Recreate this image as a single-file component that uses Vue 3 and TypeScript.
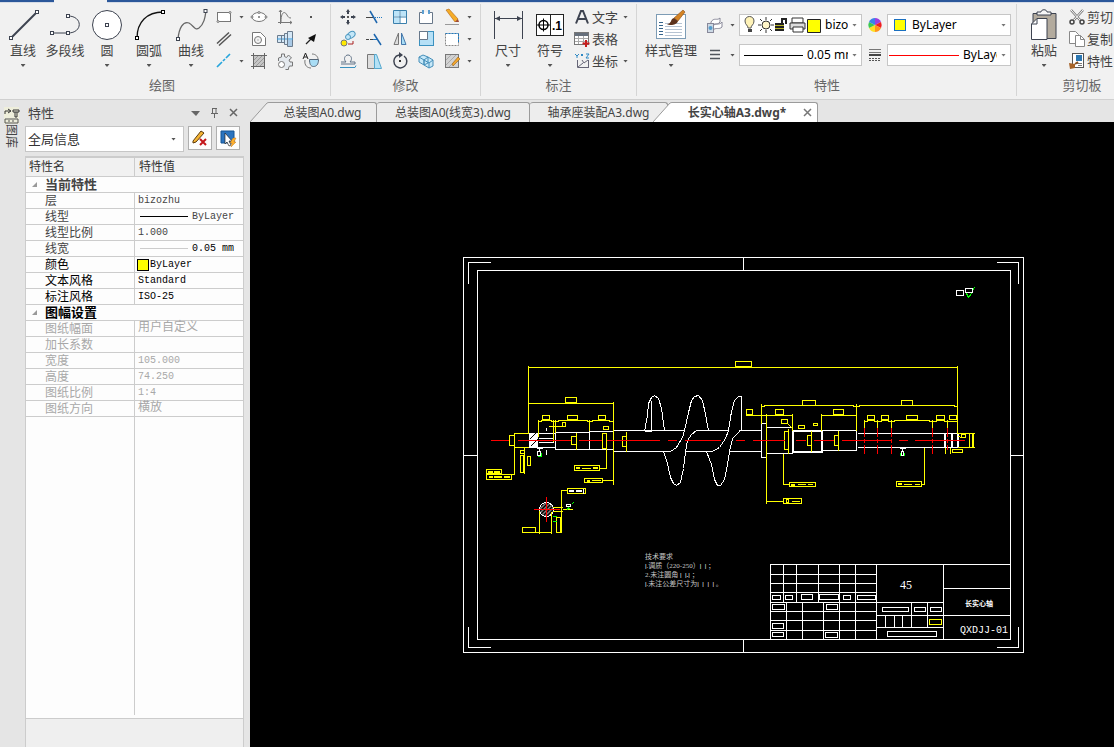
<script setup lang="ts">
import { ref } from 'vue'

interface Tool { icon: string; label: string; menu?: boolean }
interface Row { name: string; value?: string; kind?: 'line' | 'width' | 'color' | 'han'; tone: 'mid' | 'dark' | 'off' }
interface Section { title: string; tone: 'mid' | 'dark'; rows: Row[] }

const ink = '#3d4350'
const node = (x: number, y: number, c = ink) =>
  `<rect x="${x - 1.5}" y="${y - 1.5}" width="3" height="3" fill="#fff" stroke="${c}"/>`

const big: Record<string, string> = {
  line: `<path d="M4 29L30 3" stroke="${ink}" stroke-width="2"/>${node(4, 29)}${node(30, 3)}`,
  pline: `<path d="M3 24H19M19 7C34 7 34 24 19 24" stroke="${ink}" fill="none"/>${node(3, 24)}${node(19, 24)}${node(19, 7)}`,
  circle: `<circle cx="16" cy="16" r="14.5" fill="#fff" stroke="${ink}"/>${node(16, 16)}`,
  arc: `<path d="M4 29C4 13 14 3 30 3" stroke="#111" stroke-width="1.3" fill="none"/>${node(4, 29, '#000')}${node(30, 3, '#000')}`,
  spline: `<path d="M3 30C4 19 8 12 14 14C19 17 20 22 24 19C29 15 30 9 31 2" stroke="#666" stroke-width="1.3" fill="none"/>${node(3, 30)}${node(30.5, 2)}`,
  dim: `<path d="M2.500 2V30M30.500 2V30M3 9.500H30" stroke="${ink}"/><path d="M3 9.500l5-2.500v5zM30 9.500l-5-2.500v5z" fill="${ink}"/>`,
  symbol: `<rect x="2.500" y="5.500" width="27" height="21" fill="#fff" stroke="#222"/><path d="M16.500 5V27" stroke="#222"/><circle cx="9.500" cy="16" r="4.500" fill="none" stroke="#000" stroke-width="1.500"/><path d="M3 16H16M9.500 9.500V22.500" stroke="#000"/><text x="18" y="21" font-family="Liberation Sans,sans-serif" font-weight="700" font-size="12">.1</text>`,
  style: `<rect x="1.500" y="5.500" width="29" height="24" fill="#fff" stroke="#7d9cb5"/><path d="M4 13.500h4M4 16.500h4M4 19.500h4M4 22.500h4M4 25.500h4" stroke="#35648c"/><path d="M10 14.500h17M10 17.500h17M10 20.500h17M10 23.500h17M10 26.500h17" stroke="#b6c3d2"/><path d="M19 9L28 1l2 2l-7 9z" fill="#d48425" stroke="#8b4c13" stroke-width=".6"/><path d="M12 15c5 0 3-5 7-6l4 3c-1 4-8 5-11 3z" fill="#5d321b"/>`,
  paste: `<path d="M5 4.500h23v25H5z" fill="#b3ab9e" stroke="${ink}"/><path d="M9 6V3h4c0-3 6-3 6 0h4v3z" fill="#f7f7f7" stroke="${ink}"/><path d="M9 9.500h10v21H3.500V15z" fill="#fff" stroke="${ink}"/><path d="M3.500 15H9V9.500" fill="none" stroke="${ink}"/>`,
}

const small: Record<string, string> = {
  rect: `<rect x="2.500" y="4.500" width="13" height="9" fill="#fff" stroke="#777"/><circle cx="15" cy="4.500" r="1" fill="#fff" stroke="#777"/><circle cx="3" cy="13.500" r="1" fill="#fff" stroke="#777"/>`,
  ellipse: `<ellipse cx="9" cy="9" rx="7" ry="4.500" fill="#fff" stroke="#777"/><path d="M8 9h2M9 8v2" stroke="#777"/><circle cx="2" cy="9" r="1" fill="#fff" stroke="#777"/><circle cx="9" cy="4.500" r="1" fill="#fff" stroke="#777"/><circle cx="16" cy="9" r="1" fill="#fff" stroke="#777"/>`,
  graph: `<path d="M4.500 2v14M2 14.500h14M3 4l1.500-2L6 4M14 13l2 1.500l-2 1.500" fill="none" stroke="#777"/><path d="M5 14C5 3 9 3 11 7C12 9 13 10 15 10" fill="none" stroke="#777"/>`,
  dot: `<rect x="8" y="8" width="2" height="2" fill="#555"/>`,
  double: `<path d="M2 13.500L14 2.500M4 15.500L16 4.500" stroke="#555" stroke-width="1.500"/>`,
  hole: `<path d="M2.500 2.500h8l5 5v8h-13z" fill="#fff" stroke="#777"/><circle cx="8" cy="10" r="3.500" fill="#f2f2f2" stroke="#777"/><path d="M8 9.500v1" stroke="#777"/>`,
  shaft: `<path d="M1.500 5.500h7v-2h3v-2h5v15h-5v-2h-3v-2h-7z" fill="#d5e8f7" stroke="#6a7b8d"/><path d="M1 9h16" stroke="#3b9bdc"/><path d="M5.500 5v8M8.500 4v9M11.500 2v13" stroke="#6a7b8d"/><path d="M12 10h4v6h-4z" fill="#a9c9e6"/>`,
  arrow: `<path d="M4 14L9 9" stroke="#222" stroke-width="1.300"/><path d="M14 4l-2 8l-6-4z" fill="#111"/>`,
  cline: `<path d="M2 15L7 10M8 9l2-2M11 6l4-4" stroke="#27a5dc" stroke-width="1.700"/>`,
  hatch: `<rect x="4" y="4" width="10" height="10" fill="#c6c6c6"/><path d="M4 8l4-4M4 12l8-8M6 14l8-8M10 14l4-4" stroke="#999"/><path d="M1 3.500h16M1 14.500h14M3.500 1v16M14.500 1v16" stroke="#666"/>`,
  gear: `<path d="M2.500 9V6l3-1V2h3v2.500l2 1l2-2.500l3 3l-2.500 2l1 2h2.500v4h-3l-1 2v1.500h-3" fill="#e4e9ee" stroke="#777"/><circle cx="5.500" cy="12.500" r="3" fill="#fff" stroke="#777"/>`,
  block: `<path d="M3 8c-1 6 3 8 6 8M10 2c4 0 6 3 6 5" fill="none" stroke="#777"/><path d="M7.500 7.500h9c0 5-2 7-5 7c-3 0-4-3-4-7z" fill="#a9ddf5" stroke="#567"/><path d="M1 7l2.500-6L6 7M2 5h3" fill="none" stroke="#222"/>`,
  move: `<path d="M9 1l2 3H7zM9 17l2-3H7zM1 9l3-2v4zM17 9l-3-2v4z" fill="${ink}"/><path d="M9 4v2M9 12v2M4 9h2M12 9h2" stroke="${ink}" stroke-width="2"/><rect x="8" y="8" width="2" height="2" fill="#555"/>`,
  trim: `<path d="M1 9.500h8" stroke="#444"/><path d="M10 9.500h7" stroke="#1f7ac4" stroke-dasharray="1 1"/><path d="M5 3l7 12" stroke="#1c65ad" stroke-width="1.500"/>`,
  array: `<path d="M2.500 2.500h13v13h-13zM9 2v14M2 9h14" fill="#fff" stroke="#3b80ac"/><rect x="10" y="3" width="5" height="5" fill="#bde4f8"/><rect x="3" y="3" width="5" height="5" fill="#bde4f8"/><rect x="3" y="10" width="5" height="5" fill="#bde4f8"/>`,
  breakr: `<path d="M5 4.500H2.500v11h13v-11H13" fill="#fff" stroke="#687789"/><path d="M6 2v4M12 2v4" stroke="#2b81c3" stroke-width="1.500"/>`,
  erase: `<path d="M3 2l3-1l9 10l-3 3z" fill="#f6ad28" stroke="#ae6110" stroke-width=".6"/><path d="M12 14l3-3l1 3z" fill="#9f4a35"/><path d="M2 16.500h14" stroke="#999"/>`,
  copy: `<ellipse cx="12" cy="5" rx="4.500" ry="3" transform="rotate(-35 12 5)" fill="#c4e7f8" stroke="#4b96bf"/><circle cx="9" cy="7" r="2.500" fill="#c4e7f8" stroke="#4b96bf"/><circle cx="5" cy="13" r="3" fill="#ffe900" stroke="#777"/><path d="M9 14h5v-3" fill="none" stroke="#a22"/>`,
  extend: `<path d="M1 9.500h8" stroke="#444" stroke-dasharray="3 1"/><path d="M8 9.500h5" stroke="#1f7ac4"/><path d="M9 4l7 11" stroke="#1c65ad" stroke-width="1.500"/>`,
  mirror: `<path d="M7.500 3L3 14.500h4.500z" fill="#ddd" stroke="#777"/><path d="M10.500 3L15 14.500h-4.500z" fill="#a9ddf5" stroke="#47a"/>`,
  scale: `<rect x="2.500" y="1.500" width="14" height="14" fill="#b6e0f6" stroke="#3b91bf"/><path d="M2.500 1.500h8v8h-8z" fill="#fff" stroke="#687789"/>`,
  stretch: `<rect x="2.500" y="3.500" width="13" height="12" fill="#fff" stroke="#888" stroke-dasharray="2 1"/><path d="M2.500 3.500h13M15.500 4v9" stroke="#1e7bc2" stroke-dasharray="2 1"/>`,
  offset: `<path d="M2 10h5c-3-3-1-7 2-7s5 4 2 7h5v2H2" fill="none" stroke="#607287"/><path d="M1 15.500h15l1-2" fill="none" stroke="#3b91bf"/>`,
  chamfer: `<path d="M2.500 2.500h7v14h-7z" fill="#ddd" stroke="#777"/><path d="M9.500 2.500h2l5 14h-7z" fill="#b4e1f5" stroke="#55a7cd"/>`,
  rotate: `<path d="M8 3a6.500 6.500 0 1 0 5 1" fill="none" stroke="${ink}" stroke-width="1.500"/><path d="M8 0l4 3l-4 3z" fill="${ink}"/><rect x="8" y="8" width="2" height="2" fill="#333"/>`,
  explode: `<path d="M2 5l4-2 5 2v6l-4 2-5-3zM7 8l4-3 5 3v6l-4 2-5-3z" fill="#c7e8f8" stroke="#448eb9"/><path d="M2 5l5 3v5M7 8l5 3 4-3M12 11v5" stroke="#448eb9" fill="none"/>`,
  edit: `<rect x="2.500" y="2.500" width="13" height="13" fill="#d2d2d2" stroke="#777"/><path d="M3 8l5-5M3 13L13 3M6 15l9-9" stroke="#aaa"/><path d="M9 12l6-7 2 2-7 7z" fill="#f2a62d" stroke="#85510c" stroke-width=".5"/>`,
  text: `<path d="M3 15.500L8 3h2l5 12.500M5 11h8" fill="none" stroke="${ink}" stroke-width="2"/>`,
  table: `<rect x="1.500" y="2.500" width="14" height="12" fill="#fff" stroke="#777"/><rect x="2" y="3" width="13" height="3" fill="#66707c"/><path d="M2 8.500h13M2 11.500h13M5.500 6v8M10.500 6v8" stroke="#aaa"/><path d="M13 10v7M9.500 13.500h7" stroke="#c81e1e" stroke-width="2"/>`,
  coord: `<path d="M4.500 8v7.500H16M5 15l5-4M9 8l2 3l4-3M15.500 8v8" fill="none" stroke="#667"/><path d="M2 2l2 2v2M6 2L4 4M8 2l2 2M10 2L8 4M13 2h3l-3 4h3" fill="none" stroke="#2f89c4"/>`,
  layers: `<path d="M5 6c3-5 6-1 9-4v4c-3 4-6 0-9 4zM7 10c3-4 6 0 9-4v5c-3 3-6 0-9 3z" fill="#fff" stroke="#889"/><rect x="1.500" y="7.500" width="6" height="9" fill="#ccd9e5" stroke="#889"/><circle cx="4.500" cy="12" r="2" fill="#569dcc"/>`,
  bars: `<path d="M4 4.500h10M4 8.500h10M4 12.500h10" stroke="#50555c" stroke-width="1.500"/>`,
  wheel: `<g transform="translate(9 9)"><path d="M0 0L0-7A7 7 0 0 1 6-3z" fill="#9b3fe0"/><path d="M0 0L6-3A7 7 0 0 1 6 3z" fill="#f01e22"/><path d="M0 0L6 3A7 7 0 0 1 0 7z" fill="#ff951c"/><path d="M0 0L0 7A7 7 0 0 1-6 3z" fill="#ffdf23"/><path d="M0 0L-6 3A7 7 0 0 1-6-3z" fill="#3cc951"/><path d="M0 0L-6-3A7 7 0 0 1 0-7z" fill="#3b82ea"/></g>`,
  types: `<path d="M3 3.500h12M3 6.500h12" stroke="#777"/><path d="M3 9h12" stroke="#444" stroke-width="2"/><path d="M3 12.500h12M3 14.500h12" stroke="#555" stroke-dasharray="2 1"/>`,
  cut: `<path d="M3 2l9 10M15 2L6 12" stroke="#777" stroke-width="2.500"/><path d="M3 2l9 10M15 2L6 12" stroke="#fff"/><circle cx="4" cy="14" r="2" fill="none" stroke="#444" stroke-width="1.500"/><circle cx="14" cy="14" r="2" fill="none" stroke="#444" stroke-width="1.500"/>`,
  pages: `<path d="M1.500 1.500h6l3 3v9h-9z" fill="#fff" stroke="#888"/><path d="M7.500 5.500h5l4 4v7h-9z" fill="#fff" stroke="#888"/><path d="M12.500 5.500v4h4" fill="none" stroke="#888"/>`,
  match: `<rect x="4.500" y="1.500" width="11" height="14" fill="#fff" stroke="#555"/><rect x="8" y="3" width="6" height="6" fill="#2b77b2"/><path d="M8 11.500h6M10 13.500h4" stroke="#777"/><path d="M1 11l6 1v4l-5 1z" fill="#a66328"/><path d="M7 12l3-2" stroke="#88501f" stroke-width="2"/>`,
}

const drawBig: Tool[] = [
  { icon: 'line', label: '直线', menu: true }, { icon: 'pline', label: '多段线' },
  { icon: 'circle', label: '圆', menu: true }, { icon: 'arc', label: '圆弧', menu: true },
  { icon: 'spline', label: '曲线', menu: true },
]
const annoBig: Tool[] = [
  { icon: 'dim', label: '尺寸', menu: true }, { icon: 'symbol', label: '符号', menu: true },
]
const drawSmall: Tool[][] = [
  [{ icon: 'rect', label: '矩形', menu: true }, { icon: 'ellipse', label: '椭圆' }, { icon: 'graph', label: '公式曲线' }, { icon: 'dot', label: '点' }],
  [{ icon: 'double', label: '平行线' }, { icon: 'hole', label: '轮廓' }, { icon: 'shaft', label: '孔轴' }, { icon: 'arrow', label: '箭头' }],
  [{ icon: 'cline', label: '中心线', menu: true }, { icon: 'hatch', label: '剖面线' }, { icon: 'gear', label: '齿形' }, { icon: 'block', label: '局部放大' }],
]
const editSmall: Tool[][] = [
  [{ icon: 'move', label: '平移' }, { icon: 'trim', label: '裁剪' }, { icon: 'array', label: '阵列' }, { icon: 'breakr', label: '打断' }, { icon: 'erase', label: '删除', menu: true }],
  [{ icon: 'copy', label: '平移复制' }, { icon: 'extend', label: '延伸' }, { icon: 'mirror', label: '镜像' }, { icon: 'scale', label: '缩放' }, { icon: 'stretch', label: '拉伸', menu: true }],
  [{ icon: 'offset', label: '等距线' }, { icon: 'chamfer', label: '过渡' }, { icon: 'rotate', label: '旋转' }, { icon: 'explode', label: '分解' }, { icon: 'edit', label: '填充编辑', menu: true }],
]
const annoSmall: Tool[] = [
  { icon: 'text', label: '文字', menu: true }, { icon: 'table', label: '表格' }, { icon: 'coord', label: '坐标', menu: true },
]
const clipSmall: Tool[] = [
  { icon: 'cut', label: '剪切' }, { icon: 'pages', label: '复制' }, { icon: 'match', label: '特性' },
]

const tabs = ['总装图A0.dwg', '总装图A0(线宽3).dwg', '轴承座装配A3.dwg', '长实心轴A3.dwg*']
const active = ref(3)

const sections: Section[] = [
  { title: '当前特性', tone: 'mid', rows: [
    { name: '层', value: 'bizozhu', tone: 'mid' },
    { name: '线型', value: 'ByLayer', kind: 'line', tone: 'mid' },
    { name: '线型比例', value: '1.000', tone: 'mid' },
    { name: '线宽', value: '0.05 mm', kind: 'width', tone: 'mid' },
    { name: '颜色', value: 'ByLayer', kind: 'color', tone: 'dark' },
    { name: '文本风格', value: 'Standard', tone: 'dark' },
    { name: '标注风格', value: 'ISO-25', tone: 'dark' },
  ] },
  { title: '图幅设置', tone: 'dark', rows: [
    { name: '图纸幅面', value: '用户自定义', kind: 'han', tone: 'off' },
    { name: '加长系数', value: '', tone: 'off' },
    { name: '宽度', value: '105.000', tone: 'off' },
    { name: '高度', value: '74.250', tone: 'off' },
    { name: '图纸比例', value: '1:4', tone: 'off' },
    { name: '图纸方向', value: '横放', kind: 'han', tone: 'off' },
  ] },
]

/* boxes are [left, top, right, bottom] in drawing units */
type Box = [number, number, number, number]
const box = (list: Box[]) => list.map(([l, t, r, b]) => `M${l} ${t}H${r}V${b}H${l}Z`).join('')

const frame = box([[463, 257, 1023, 652], [477, 270, 1010, 639]]) +
  'M468 283V262H490M996 262H1018V283M468 626V647H490M996 647H1018V626' +
  'M743 257V270M743 639V652M463 455H477M1010 455H1023'

const titleBlock = 'M770 639V564H1010M876 564V639M943 564V639' +
  'M770 574H876M770 583H876M770 592H876M770 602H943M770 611H876M770 620H876M770 630H876' +
  'M783 564V602M796 564V602M818 564V602M839 564V639M855 564V639M786 602V639M802 602V639M823 602V639' +
  'M876 615H943M876 627H943M911 602V627M927 602V627M885 615V627M894 615V627M902 615V627M943 588H1010M943 615H1010' +
  box([[772, 595, 780, 599], [785, 595, 792, 599], [801, 594, 812, 599], [819, 594, 838, 599], [843, 595, 850, 599], [857, 595, 875, 599],
    [772, 604, 784, 609], [826, 604, 837, 609], [772, 623, 783, 628], [772, 632, 783, 636], [825, 632, 837, 637],
    [882, 607, 908, 611], [914, 607, 925, 611], [930, 607, 941, 611], [887, 631, 936, 636]])

const body = 'M528 433H555M528 447H555M538 438H553M538 442H553' +
  box([[555, 432, 589, 449], [589, 431, 613, 449]]) +
  'M613 430H684M695 430H728M738 430H761M613 451H670M685 451H712M729 451H761' +
  box([[761, 423, 766, 457], [821, 430, 856, 450]]) +
  'M766 427H792M766 453H792M857 433H957M857 447H957M546 427V430M546 449V454' +
  box([[956, 290, 963, 295], [965, 288, 972, 292], [537, 451, 540, 455], [566, 504, 570, 506], [901, 451, 903, 455]]) +
  'M536 448H542M899 448H905M902 448V451M539 448V451'

const spiral = 'M644 431H651V400M644 431L647 415L648 403L651 397L654 395L658 398L661 408L664 430' +
  'M684 430L688 412L691 400L694 396L698 395L702 400L705 414L708 430' +
  'M728 430L731 411L734 400L738 396L741 396V430' +
  'M663 451L667 463L670 477L673 483L676 485L680 482L683 468L685 451' +
  'M706 451L711 464L714 479L717 485L720 485L724 479L727 464L729 451' +
  'M670 451L676 447L682 437L684 430M685 451L687 440L691 434L696 430' +
  'M712 451L719 447L725 438L728 430M729 451L732 438L738 432L740 430'

const heavy = 'M792 430H821V451H792ZM944 433V447M951 433V447M957 433V447'
const centre = 'M490 440H508M517 440H570M578 440H601M606 440H659M667 440H676M684 440H720M735 440H744M752 440H784M795 440H805M813 440H833M841 440H890M898 440H907M914 440H964' +
  'M864 427V436M864 438V442M864 444V453M877 427V436M877 438V442M877 444V453M891 427V436M891 438V442M891 444V453M932 427V436M932 438V442M932 444V453M947 427V436M947 438V442M947 444V449' +
  'M533 509H559M546 496V521'

const dims = 'M528 367H957M528 365V433M957 365V433M528 403H613M613 401V484' +
  'M538 421H541V420H551V421H558V420H587V421H592V420H609V421H613M538 419V436M553 419V441M555 419V432M589 419V430' +
  'M513 433H528M513 447H528M548 426H562M514 433V474H501M524 447V473M606 432V468H599M602 480H613' +
  'M761 403V423M761 406H764V405H853V406H859V405H954V406H957M856 403V430M745 415H792M766 413V503M792 413V430M821 415H856M821 413V430' +
  'M783 453V484H789M766 501H783M788 428V453M811 430V451M838 430V450M576 432V449M626 431V451' +
  'M864 419V427M877 419V427M891 419V427M932 419V427M947 419V427M864 421H867V420H874V421H881V420H888V421H894V420H929V421H936V420H944V421H957' +
  'M957 433H974M957 447H974M972 433V447M924 447V484H921M945 447V453M950 447V453M958 436L961 437M787 423L792 428' +
  'M552 507H562M552 511H562M561 532V490H567M539 510V533M551 511V533M522 532H551M562 509H572' +
  box([[735, 361, 751, 366], [565, 397, 576, 402], [542, 415, 549, 419], [567, 415, 577, 419], [598, 415, 605, 419],
    [562, 422, 565, 426], [603, 426, 608, 429], [509, 435, 514, 445], [571, 436, 576, 444], [602, 433, 606, 448], [622, 436, 626, 446],
    [520, 450, 524, 453], [520, 455, 523, 472], [527, 456, 530, 465], [486, 469, 501, 473], [486, 474, 511, 479],
    [574, 465, 599, 470], [584, 478, 602, 482], [522, 527, 535, 532], [556, 517, 560, 532], [567, 488, 585, 493],
    [802, 400, 815, 405], [746, 409, 752, 414], [775, 409, 783, 414], [781, 419, 787, 423], [798, 425, 804, 428], [813, 423, 817, 425],
    [784, 431, 788, 449], [807, 435, 811, 445], [834, 435, 838, 445], [833, 409, 843, 414],
    [789, 482, 815, 486], [783, 498, 801, 503], [901, 400, 912, 405], [867, 415, 874, 419], [881, 415, 888, 419], [906, 415, 917, 419],
    [936, 415, 944, 419], [949, 415, 956, 419], [961, 434, 965, 437], [969, 433, 973, 447], [952, 449, 962, 452], [896, 481, 921, 486],
    [929, 619, 941, 624],
    [488, 471, 492, 472], [494, 471, 499, 472], [489, 476, 492, 477], [494, 476, 501, 477], [504, 476, 509, 477],
    [576, 467, 579, 468], [581, 468, 590, 468], [593, 467, 597, 468], [587, 480, 589, 481], [591, 480, 600, 480],
    [791, 484, 794, 485], [797, 484, 805, 484], [807, 484, 812, 484], [786, 499, 788, 502], [791, 501, 799, 501],
    [898, 483, 901, 484], [903, 484, 911, 484], [914, 484, 919, 484]])
const green = 'M966 293L968 297L971 293M972 290L974 287M537 456H541M541 452V456M567 508H569M571 504L573 502M552 516H556M552 521H556M900 452V455M904 452V455M568 507L566 510'
</script>

<template>
  <div class="app">
    <header class="ribbon">
      <div class="accent"><i class="accent-left"></i><i class="accent-right"></i></div>
      <div class="groups">
        <section class="group g-draw">
          <div class="tools">
            <button v-for="t in drawBig" :key="t.label" class="big">
              <svg class="i32" viewBox="0 0 32 32" v-html="big[t.icon]"></svg>
              <span>{{ t.label }}</span><i v-if="t.menu" class="tri"></i>
            </button>
            <div class="matrix">
              <div v-for="(r, k) in drawSmall" :key="k" class="mrow">
                <template v-for="(t, c) in r" :key="t.label">
                  <button class="mini" :aria-label="t.label"><svg class="i18" viewBox="0 0 18 18" v-html="small[t.icon]"></svg></button>
                  <span v-if="c === 0" class="slot"><i v-if="t.menu" class="tri"></i></span>
                </template>
              </div>
            </div>
          </div>
          <h2>绘图</h2>
        </section>
        <section class="group g-edit">
          <div class="tools">
            <div class="matrix">
              <div v-for="(r, k) in editSmall" :key="k" class="mrow">
                <button v-for="t in r" :key="t.label" class="mini" :aria-label="t.label"><svg class="i18" viewBox="0 0 18 18" v-html="small[t.icon]"></svg></button>
                <span class="slot"><i class="tri"></i></span>
              </div>
            </div>
          </div>
          <h2>修改</h2>
        </section>
        <section class="group g-anno">
          <div class="tools">
            <button v-for="t in annoBig" :key="t.label" class="big">
              <svg class="i32" viewBox="0 0 32 32" v-html="big[t.icon]"></svg>
              <span>{{ t.label }}</span><i class="tri"></i>
            </button>
            <div class="matrix named">
              <button v-for="t in annoSmall" :key="t.label" class="wide">
                <svg class="i18" viewBox="0 0 18 18" v-html="small[t.icon]"></svg><span>{{ t.label }}</span><i v-if="t.menu" class="tri"></i>
              </button>
            </div>
          </div>
          <h2>标注</h2>
        </section>
        <section class="group g-prop">
          <div class="tools">
            <button class="big style-btn">
              <svg class="i32" viewBox="0 0 32 32" v-html="big.style"></svg>
              <span>样式管理</span><i class="tri"></i>
            </button>
            <div class="combos">
              <button class="mini" aria-label="图层"><svg class="i18" viewBox="0 0 18 18" v-html="small.layers"></svg></button>
              <i class="tri"></i>
              <div class="combo packed">
                <svg class="states" viewBox="0 0 80 20" aria-hidden="true">
                  <path d="M4 6c0-6 9-6 9 0c0 4-3 4-3 7H7c0-3-3-3-3-7z" fill="#fff3b8" stroke="#555"/><path d="M7 14h4v3H7z" fill="#444"/>
                  <circle cx="25" cy="10" r="4" fill="#fff5c8" stroke="#333"/><path d="M25 2v3M25 15v3M17 10h3M30 10h3M19 4l2 2M29 14l2 2M31 4l-2 2M21 14l-2 2" stroke="#333"/>
                  <path d="M34 8h9v8h-9z" fill="#222"/><path d="M34 10.500h9M34 13.500h9" stroke="#b9b629"/><path d="M41 8V4h4v5" fill="none" stroke="#222" stroke-width="2"/>
                  <path d="M51 3h11v5H51z" fill="#fff" stroke="#333"/><path d="M49 8h15v6H49z" fill="#ddd" stroke="#333"/><path d="M52 12h10v5H52z" fill="#fff" stroke="#333"/>
                  <path d="M66.500 4.500h13v13h-13z" fill="#ff0" stroke="#222"/>
                </svg>
                <select aria-label="图层"><option>bizozhu</option></select><i class="tri"></i>
              </div>
              <button class="mini" aria-label="颜色"><svg class="i18" viewBox="0 0 18 18" v-html="small.wheel"></svg></button>
              <div class="combo">
                <i class="chip"></i>
                <select aria-label="颜色"><option>ByLayer</option></select><i class="tri"></i>
              </div>
              <button class="mini" aria-label="线宽"><svg class="i18" viewBox="0 0 18 18" v-html="small.bars"></svg></button>
              <i class="tri"></i>
              <div class="combo">
                <i class="rule"></i>
                <select aria-label="线宽"><option>0.05 mm</option></select><i class="tri"></i>
              </div>
              <button class="mini" aria-label="线型"><svg class="i18" viewBox="0 0 18 18" v-html="small.types"></svg></button>
              <div class="combo packed">
                <i class="rule red"></i>
                <select aria-label="线型"><option>ByLayer</option></select><i class="tri"></i>
              </div>
            </div>
          </div>
          <h2>特性</h2>
        </section>
        <section class="group g-clip">
          <div class="tools">
            <button class="big paste-btn">
              <svg class="i32" viewBox="0 0 32 32" v-html="big.paste"></svg>
              <span>粘贴</span><i class="tri"></i>
            </button>
            <div class="matrix">
              <button v-for="t in clipSmall" :key="t.label" class="wide">
                <svg class="i18" viewBox="0 0 18 18" v-html="small[t.icon]"></svg><span>{{ t.label }}</span>
              </button>
            </div>
          </div>
          <h2>剪切板</h2>
        </section>
      </div>
    </header>

    <main class="work">
      <nav class="rail">
        <button>
          <svg width="16" height="17" viewBox="0 0 16 17"><path d="M0 0h15v17H0z" fill="#eeeedb"/><path d="M1 7V4h5M4 2l3 2-3 2M9 3h6v2H9zM11 5v5h2V5" fill="none" stroke="#333"/><path d="M1 12h13v4H1zM4 14h2M8 14h2" fill="none" stroke="#555"/></svg>
          <span>图库</span>
        </button>
      </nav>
      <aside class="panel">
        <div class="panel-head">
          <h1>特性</h1>
          <button aria-label="菜单"><svg width="11" height="11" viewBox="0 0 11 11"><path d="M1 4h9l-4 5z" fill="#666"/></svg></button>
          <button aria-label="固定"><svg width="11" height="11" viewBox="0 0 11 11"><path d="M3.500 1v5M3 1.500h5M7 1v5M2 6.500h7M5.500 7v4" fill="none" stroke="#666"/></svg></button>
          <button aria-label="关闭"><svg width="11" height="11" viewBox="0 0 11 11"><path d="M2 2l7 7M9 2l-7 7" stroke="#666" stroke-width="1.500"/></svg></button>
        </div>
        <div class="pick">
          <div class="scope"><select aria-label="选择对象"><option>全局信息</option></select><i class="tri"></i></div>
          <button aria-label="取消选择">
            <svg width="18" height="18" viewBox="0 0 18 18"><path d="M2 12L10 2l3 2-8 9-3 1z" fill="#f5b434" stroke="#5c3b0d"/><path d="M9 10l6 6M15 10l-6 6" stroke="#c4171b" stroke-width="2"/></svg>
          </button>
          <button aria-label="快速选择">
            <svg width="18" height="18" viewBox="0 0 18 18"><path d="M2 2h13v12H2z" fill="#2b74bf" stroke="#155494"/><path d="M6 4v11l2-2 2 4 2-1-2-4h3z" fill="#fff" stroke="#222" stroke-width=".7"/><path d="M14 9l-3 5h2l-1 4 5-5h-2l2-4z" fill="#ffb12e" stroke="#bb6c10" stroke-width=".4"/></svg>
          </button>
        </div>
        <div class="sheet">
          <table>
            <colgroup><col class="c-name"><col></colgroup>
            <thead><tr><th scope="col">特性名</th><th scope="col">特性值</th></tr></thead>
            <tbody v-for="s in sections" :key="s.title">
              <tr><th colspan="2" scope="rowgroup" :class="['sect', s.tone]"><div><i class="fold"></i>{{ s.title }}</div></th></tr>
              <tr v-for="r in s.rows" :key="r.name" :class="r.tone">
                <th scope="row"><div class="name">{{ r.name }}</div></th>
                <td><div :class="['val', r.kind]"><i v-if="r.kind && r.kind !== 'han'" :class="'k-' + r.kind"></i>{{ r.value }}</div></td>
              </tr>
            </tbody>
          </table>
          <div class="blank"><i></i></div>
          <div class="hint"></div>
        </div>
      </aside>
      <section class="docs">
        <div class="tabs" role="tablist">
          <div v-for="(t, k) in tabs" :key="t" :class="['tab', 't' + k, { on: active === k }]">
            <svg v-if="k === 0 || k === 3" width="19" height="20" viewBox="0 0 19 20"><path d="M0 20L17 1Q18 0 19 0V20z" :fill="active === k ? '#fff' : '#ededed'"/><path d="M0 20L17 1Q18 0.500 19 0.500" fill="none" stroke="#9b9b9b"/></svg>
            <button class="face" role="tab" :aria-selected="active === k" @click="active = k">{{ t }}</button>
            <button v-if="k === 3" class="close" aria-label="关闭"><svg width="9" height="9" viewBox="0 0 9 9"><path d="M1 1l7 7M8 1l-7 7" stroke="#777" stroke-width="1.500"/></svg></button>
          </div>
        </div>
        <div class="canvas">
          <svg class="sheet-draw" viewBox="250 122 864 625" role="img" aria-label="长实心轴">
            <defs><pattern id="cross" width="4" height="4" patternUnits="userSpaceOnUse"><path d="M0 4L4 0" stroke="#fff"/></pattern></defs>
            <g transform="translate(.5 .5)" fill="none" shape-rendering="crispEdges">
              <path :d="frame" stroke="#fff"/>
              <path :d="titleBlock" stroke="#fff"/>
              <path :d="body" stroke="#fff"/>
              <path :d="spiral" stroke="#fff"/>
              <path d="M528 433H537V447H528Z" fill="#fff"/>
              <path d="M529 439L535 433M530 446L537 439" stroke="#000"/>
              <path :d="heavy" stroke="#fff" stroke-width="2"/>
              <circle cx="546" cy="509" r="7" fill="url(#cross)" stroke="#fff"/>
              <path :d="dims" stroke="#ff0"/>
              <path d="M569 490H573V491H569ZM576 490H581V491H576ZM583 488V493" stroke="#fff"/>
              <path :d="green" stroke="#0f0"/>
              <path :d="centre" stroke="#f00"/>
            </g>
            <g class="notes">
              <text x="645" y="559">技术要求</text>
              <text x="645" y="568"><tspan>|</tspan>.调质（220-250）<tspan>|&nbsp;&nbsp;|</tspan>&nbsp;；</text>
              <text x="645" y="577">2.未注圆角&nbsp;<tspan>|&nbsp;&nbsp;|.|</tspan>&nbsp;；</text>
              <text x="645" y="586"><tspan>|</tspan>.未注公差尺寸为<tspan>|&nbsp;&nbsp;|&nbsp;&nbsp;|&nbsp;&nbsp;|</tspan>&nbsp;。</text>
            </g>
            <g class="stamp">
              <text x="900" y="589">45</text>
              <text class="code" x="960" y="633">QXDJJ-01</text>
              <text class="part" x="965" y="606">长实心轴</text>
            </g>
          </svg>
        </div>
      </section>
    </main>
  </div>
</template>

<style>
body { background: #e5e5e5; }
</style>

<style scoped>
.app { display: flex; flex-direction: column; height: 100vh; min-height: 500px; overflow: hidden; color: #444; font: 13px/18px "Noto Sans", "Noto Sans CJK SC", sans-serif; }
.app *, .app *::before, .app *::after { box-sizing: border-box; }
button { border: 0; background: none; padding: 0; margin: 0; color: inherit; font: inherit; cursor: default; }
h1, h2 { margin: 0; font: inherit; }
svg { display: block; flex: none; }
select { appearance: none; border: 0; border-radius: 0; background: none; padding: 0; margin: 0; min-width: 0; flex: 1; font: inherit; color: #000; outline: 0; }
.tri { display: block; flex: none; width: 5px; height: 3px; background: #555; clip-path: polygon(0 0, 100% 0, 50% 100%); }

.ribbon { flex: none; background: #f1f1f1; border-bottom: 1px solid #d0d0d0; }
.accent { display: flex; gap: 53px; height: 4px; }
.accent i { height: 2px; background: #2b579a; box-shadow: 0 1px #d5dbe6; }
.accent-left { width: 54px; }
.accent-right { flex: 1; }
.groups { display: flex; overflow: hidden; height: 95px; padding-bottom: 3px; }
.group { display: flex; flex: none; flex-direction: column; border-right: 1px solid #d5d5d5; }
.group h2 { text-align: center; line-height: 19px; color: #666; }
.tools { display: flex; height: 72px; padding-top: 2px; }
.g-draw { width: 331px; padding-left: 2px; }
.g-draw h2 { padding-right: 8px; }
.g-draw .matrix { margin-left: -1px; }
.g-edit { width: 150px; padding-left: 4px; }
.g-anno { width: 156px; padding-left: 6px; }
.g-prop { width: 380px; padding-left: 1px; }
.g-clip { width: 132px; padding-left: 3px; }
.g-clip h2 { padding-right: 4px; }
.g-edit h2 { padding-right: 4px; }
.g-anno h2 { padding-right: 6px; }
.big { display: flex; flex: none; flex-direction: column; align-items: center; width: 42px; padding-top: 3px; white-space: nowrap; }
.big .tri { margin-top: 5px; }
.style-btn { width: 66px; }
.paste-btn { width: 48px; }
.i32 { width: 32px; height: 32px; overflow: visible; }
.i18 { width: 18px; height: 18px; }
.mrow { display: flex; height: 22px; }
.mini { display: flex; align-items: center; justify-content: center; width: 26px; }
.slot { display: flex; align-items: center; justify-content: center; width: 9px; }
.wide { display: flex; align-items: center; height: 22px; gap: 1px; }
.wide .tri { margin-left: 4px; }
.named { padding-left: 2px; }
.combos { display: grid; grid-template-columns: 22px 13px 123px 25px 124px; grid-template-rows: 22px 22px; align-content: start; align-items: center; row-gap: 8px; padding-top: 8px; font-size: 12px; }
.combos > .tri { justify-self: center; }
.combo { display: flex; align-items: center; height: 22px; padding: 0 4px; gap: 4px; background: #fff; border: 1px solid #c6c6c6; }
.packed { padding-left: 1px; }
.combos .mini { justify-self: center; }
.combo .tri { background: #777; }
.states { width: 80px; height: 20px; overflow: visible; }
.chip { width: 12px; height: 12px; margin: 0 2px; background: #ff0; border: 1px solid #1a6fc0; }
.rule { flex: none; width: 59px; height: 1px; background: #000; }
.rule.red { width: 70px; background: #f00; }

.work { display: flex; flex: 1; min-height: 0; background: #e5e5e5; }
.rail { width: 25px; flex: none; padding: 7px 0 0 4px; }
.rail button { display: block; width: 15px; font-size: 12px; line-height: 15px; }
.rail span { display: block; writing-mode: vertical-rl; text-orientation: sideways; }
.panel { display: flex; flex: none; flex-direction: column; width: 219px; }
.panel-head { display: flex; align-items: center; height: 25px; padding: 0 5px 0 3px; gap: 8px; }
.panel-head h1 { flex: 1; }
.pick { display: flex; height: 31px; align-items: flex-start; gap: 4px; padding-top: 1px; }
.scope { display: flex; align-items: center; width: 159px; height: 26px; padding: 0 7px 0 2px; background: #fff; border: 1px solid #c6c6c6; }
.scope select { color: #333; }
.pick button { display: grid; place-items: center; width: 24px; height: 24px; background: #fdfdfd; border: 1px solid #b0b0b0; }
.sheet { display: flex; flex: 1; min-height: 0; flex-direction: column; background: #fdfdfd; border: 1px solid #ccc; border-bottom: 0; }
table { width: 100%; table-layout: fixed; border-collapse: separate; border-spacing: 0; font: 12px/15px "Noto Sans", "Noto Sans CJK SC", sans-serif; }
.c-name { width: 108px; }
th, td { height: 16px; padding: 0; border-bottom: 1px solid #ccc; text-align: left; font-weight: 400; white-space: nowrap; }
thead th { height: 20px; padding-left: 3px; line-height: 18px; background: #f1f1f1; border-top: 1px solid #ccc; color: #333; }
thead th + th { border-left: 1px solid #ccc; padding-left: 4px; }
th.sect { font-weight: 700; }
.sect div { display: flex; align-items: center; gap: 8px; padding-left: 6px; height: 15px; font-size: 13px; }
.fold { width: 5px; height: 5px; background: #999; clip-path: polygon(100% 0, 100% 100%, 0 100%); }
.name { height: 15px; padding-left: 19px; line-height: 16px; }
td { border-left: 1px solid #ccc; }
.val { display: flex; align-items: center; height: 15px; padding-left: 3px; font: 10px/15px "Liberation Mono", "Noto Sans CJK SC", monospace; }
.val.han { font-size: 12px; }
.val.color { padding-left: 2px; gap: 1px; }
.k-line, .k-width { width: 48px; height: 1px; margin: 0 4px 0 2px; background: #000; }
.k-width { background: #ccc; }
.val.width { color: #000; }
.k-color { width: 12px; height: 12px; background: #ff0; border: 1px solid #000; }
.mid { color: #444; }
.dark { color: #000; }
.off { color: #a8a8a8; }
.blank { flex: 1; display: flex; }
.blank i { width: 109px; border-right: 1px solid #ccc; }
.hint { height: 32px; border-top: 3px solid #fdfdfd; background: #efefef; box-shadow: inset 0 1px #ccc; }

.docs { display: flex; flex: 1; flex-direction: column; min-width: 0; padding-left: 6px; }
.tabs { display: flex; height: 22px; padding-top: 2px; white-space: nowrap; }
.tab { display: flex; height: 20px; font-size: 12px; }
.face { height: 20px; background: #ededed; border: solid #9b9b9b; border-width: 1px 1px 0 0; border-radius: 0 3px 0 0; text-align: center; }
.t0 .face { width: 108px; }
.t1 .face { width: 153px; border-radius: 3px 3px 0 0; }
.t2 .face { width: 138px; border-radius: 3px 3px 0 0; }
.t3 { position: relative; margin-left: -15px; }
.t3 .face { width: 130px; border-right: 0; border-radius: 0; }
.close { display: grid; place-items: center; width: 16px; height: 20px; padding-right: 4px; border: solid #9b9b9b; border-width: 1px 1px 0 0; border-radius: 0 3px 0 0; background: #ededed; }
.on .face, .on .close { background: #fff; font-weight: 700; }
.canvas { flex: 1; min-height: 0; background: #000; }
.sheet-draw { width: 100%; height: 100%; }
.notes { fill: #c4c4c4; font: 7px "Liberation Serif", "Noto Sans CJK SC", serif; }
.notes tspan { fill: #fff; font-weight: 700; }
.stamp { fill: #fff; font: 12px "Liberation Serif", "Noto Sans CJK SC", serif; }
.code { font: 10px "Liberation Mono", monospace; }
.part { font-size: 7px; font-weight: 700; }
</style>
